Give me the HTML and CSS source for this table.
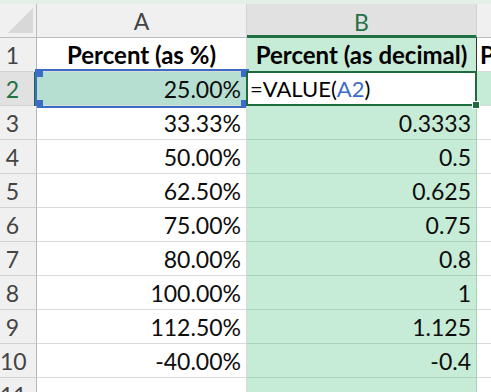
FILE: index.html
```html
<!DOCTYPE html>
<html>
<head>
<meta charset="utf-8">
<link rel="stylesheet" href="styles.css">
</head>
<body>
<div class="strip"></div>
<div class="sheet">
  <div class="corner"><div class="tri"></div></div>
  <div class="colhead">A</div>
  <div class="colhead colsel">B</div>
  <div class="colhead colc"></div>

  <div class="rowhead">1</div>
  <div class="cell a head">Percent (as %)</div>
  <div class="cell b head">Percent (as decimal)</div>
  <div class="cell c head c1">P</div>

  <div class="rowhead rowsel">2</div>
  <div class="cell a num ref">25.00%</div>
  <div class="cell b active"><span>=VALUE(</span><span class="refword">A2</span><span>)</span></div>
  <div class="cell c focus"></div>

  <div class="rowhead">3</div>
  <div class="cell a num">33.33%</div>
  <div class="cell b num">0.3333</div>
  <div class="cell c"></div>

  <div class="rowhead">4</div>
  <div class="cell a num">50.00%</div>
  <div class="cell b num">0.5</div>
  <div class="cell c"></div>

  <div class="rowhead">5</div>
  <div class="cell a num">62.50%</div>
  <div class="cell b num">0.625</div>
  <div class="cell c"></div>

  <div class="rowhead">6</div>
  <div class="cell a num">75.00%</div>
  <div class="cell b num">0.75</div>
  <div class="cell c"></div>

  <div class="rowhead">7</div>
  <div class="cell a num">80.00%</div>
  <div class="cell b num">0.8</div>
  <div class="cell c"></div>

  <div class="rowhead">8</div>
  <div class="cell a num">100.00%</div>
  <div class="cell b num">1</div>
  <div class="cell c"></div>

  <div class="rowhead">9</div>
  <div class="cell a num">112.50%</div>
  <div class="cell b num">1.125</div>
  <div class="cell c"></div>

  <div class="rowhead">10</div>
  <div class="cell a num">-40.00%</div>
  <div class="cell b num">-0.4</div>
  <div class="cell c"></div>

  <div class="rowhead">11</div>
  <div class="cell a"></div>
  <div class="cell b"></div>
  <div class="cell c"></div>
</div>
</body>
</html>
```

FILE: styles.css
```css
html, body {
  margin: 0;
  padding: 0;
  background: #ffffff;
  overflow: hidden;
}

body {
  font-family: "Lato", "Liberation Sans", sans-serif;
  font-size: 23px;
  color: #0d0d0d;
}

.strip {
  height: 4px;
  background: #e4efe8;
}

.sheet {
  display: grid;
  grid-template-columns: 37px 210px 230px 1fr;
  grid-template-rows: 34px;
  grid-auto-rows: 34px;
}

.sheet > div {
  box-sizing: border-box;
  border-right: 1px solid #dadada;
  border-bottom: 1px solid #dadada;
  white-space: nowrap;
  overflow: visible;
  position: relative;
  line-height: 34px;
}

.corner {
  background: #f0f0f0;
  border-right-color: #bdbdbd !important;
  border-bottom-color: #bdbdbd !important;
}

.tri {
  position: absolute;
  left: 8px;
  top: 4px;
  width: 25px;
  height: 25px;
  background: #d8d8d8;
  clip-path: polygon(100% 0, 100% 100%, 0 100%);
}

.colhead {
  background: #f0f0f0;
  color: #444;
  text-align: center;
  border-right-color: #d2d2d2 !important;
  border-bottom-color: #bdbdbd !important;
  line-height: 35px !important;
}

.colsel {
  background: #e1e1e1;
  color: #1f7244;
  border-bottom: 3px solid #1f7244 !important;
  line-height: 36px !important;
}

.rowhead {
  background: #f0f0f0;
  color: #444;
  text-align: center;
  padding-right: 11px;
  border-right-color: #b8b8b8 !important;
  border-bottom-color: #d2d2d2 !important;
}

.rowsel {
  background: #e1e1e1;
  color: #1f7244;
}

.rowsel::after {
  content: "";
  position: absolute;
  right: -1px;
  top: 0;
  width: 3px;
  height: 34px;
  background: #1f6b3e;
}

.cell {
  padding: 0 5px;
}

.num {
  text-align: right;
}

.head {
  font-weight: 700;
  font-size: 24px;
  text-align: center;
  color: #000;
}

.b {
  background: #c6ebd6;
  border-right-color: #a9d2b9 !important;
  border-bottom-color: #a9d2b9 !important;
}

.c1 {
  text-align: left;
  background: #fff;
  border-left: 1px solid #333;
  padding-left: 3px;
  margin-left: -1px;
}

.focus {
  background: #c6ebd6;
}

.ref {
  background: #b6dfd1;
}

.ref::after {
  content: "";
  position: absolute;
  left: 0;
  top: -1px;
  right: -1px;
  bottom: -1px;
  border: 2px solid #3b6cc8;
  box-sizing: border-box;
  background:
    linear-gradient(#3b6cc8, #3b6cc8) left top / 6px 6px no-repeat,
    linear-gradient(#3b6cc8, #3b6cc8) right top / 6px 6px no-repeat,
    linear-gradient(#3b6cc8, #3b6cc8) left bottom / 6px 6px no-repeat,
    linear-gradient(#3b6cc8, #3b6cc8) right bottom / 6px 6px no-repeat;
  margin: -2px;
}

.active {
  background: #ffffff;
  padding-left: 3px;
  font-size: 22px;
  color: #000;
}

.active::after {
  content: "";
  position: absolute;
  left: -1px;
  top: -1px;
  right: -1px;
  bottom: -1px;
  border: 2px solid #1f6b3e;
}

.active::before {
  content: "";
  position: absolute;
  right: -4px;
  bottom: -4px;
  width: 6px;
  height: 6px;
  background: #1f6b3e;
  border: 1px solid #fff;
  z-index: 2;
}

.refword {
  color: #3b6cc8;
}
```
